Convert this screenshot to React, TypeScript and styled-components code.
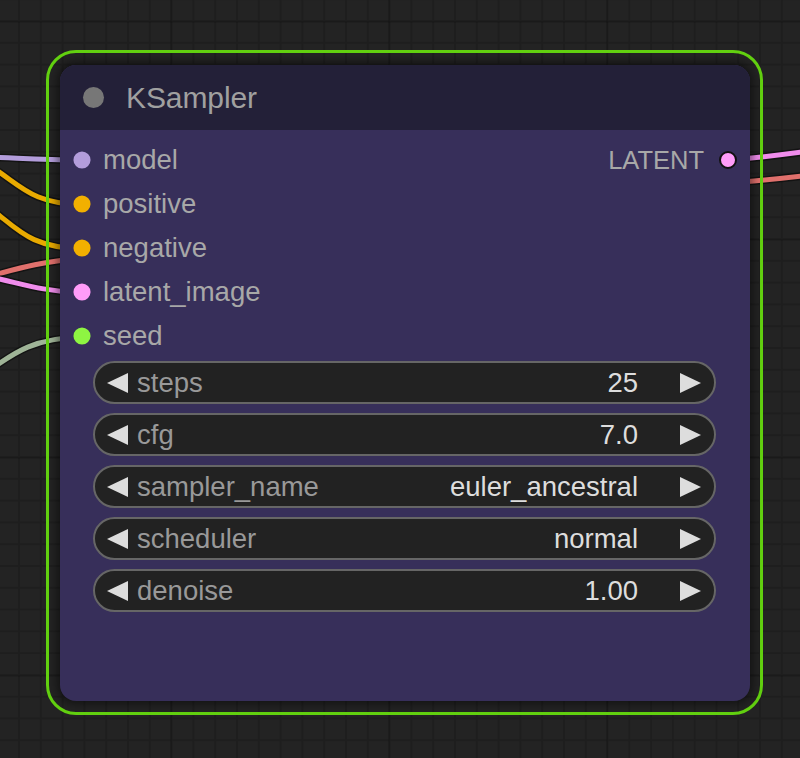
import React from "react";
import styled, { createGlobalStyle } from "styled-components";

const Global = createGlobalStyle`
  html, body { margin: 0; padding: 0; background: #222; }
  * { box-sizing: border-box; }
`;

const Canvas = styled.div`
  position: relative;
  width: 800px;
  height: 758px;
  overflow: hidden;
  font-family: "Liberation Sans", Arial, sans-serif;
  background-color: #232323;
  background-image:
    linear-gradient(to right, rgba(0,0,0,0.12) 1.5px, transparent 1.5px),
    linear-gradient(to bottom, rgba(0,0,0,0.12) 1.5px, transparent 1.5px),
    linear-gradient(to right, #1e1e1e 1.5px, transparent 1.5px),
    linear-gradient(to bottom, #1e1e1e 1.5px, transparent 1.5px);
  background-size: 218px 218px, 218px 218px, 21.8px 21.8px, 21.8px 21.8px;
  background-position: 170px 21px, 170px 21px, 18px 20px, 18px 20px;
`;

const Wires = styled.svg`
  position: absolute;
  inset: 0;
  width: 800px;
  height: 758px;
`;

const Frame = styled.div`
  position: absolute;
  left: 46px;
  top: 50px;
  width: 717px;
  height: 665px;
  border: 3px solid #62d010;
  border-radius: 30px;
  padding: 12px 10px 11px 11px;
  display: flex;
`;

const Node = styled.div`
  flex: 1;
  display: flex;
  flex-direction: column;
  background: #372f5a;
  border-radius: 16px;
  overflow: hidden;
  box-shadow: 0 0 8px 3px rgba(0, 0, 0, 0.45);
`;

const TitleBar = styled.div`
  height: 65px;
  flex: none;
  display: flex;
  align-items: center;
  gap: 22px;
  padding-left: 23px;
  background: #232038;
`;

const TitleDot = styled.span`
  width: 21px;
  height: 21px;
  border-radius: 50%;
  background: #777;
`;

const Title = styled.span`
  font-size: 30px;
  color: #a0a0a0;
  letter-spacing: -0.1px;
`;

const Slots = styled.div`
  padding-top: 8px;
  display: flex;
  flex-direction: column;
`;

const SlotRow = styled.div`
  height: 44px;
  display: flex;
  align-items: center;
  justify-content: space-between;
  padding: 0 13px 0 13px;
`;

const Slot = styled.div<{ $small?: boolean }>`
  display: flex;
  align-items: center;
  gap: 13px;
  font-size: ${(p) => (p.$small ? "25.5px" : "27.5px")};
  color: #a8a8a8;
`;

const SlotDot = styled.span<{ $c: string; $out?: boolean }>`
  width: 18px;
  height: 18px;
  border-radius: 50%;
  background: ${(p) => p.$c};
  border: ${(p) => (p.$out ? "2px solid #111" : "none")};
  ${(p) => (p.$out ? "margin-left: 2px;" : "transform: scale(0.95); margin-right: -1px;")}
`;

const Widgets = styled.div`
  display: flex;
  flex-direction: column;
  gap: 9px;
  padding: 3px 34px 0 33px;
`;

const Pill = styled.div`
  height: 43px;
  display: flex;
  align-items: center;
  border: 2px solid #666;
  border-radius: 22px;
  background: #222;
  padding: 0 13px 0 12px;
  font-size: 27.5px;
`;

const Arrow = styled.span<{ $dir: "left" | "right" }>`
  width: 0;
  height: 0;
  flex: none;
  border-top: 10.5px solid transparent;
  border-bottom: 10.5px solid transparent;
  ${(p) =>
    p.$dir === "left"
      ? "border-right: 21px solid #ddd;"
      : "border-left: 21px solid #ddd; margin-left: 42px;"}
`;

const WLabel = styled.span`
  flex: 1;
  margin-left: 9px;
  color: #999;
`;

const WValue = styled.span`
  color: #ddd;
`;

const inputs = [
  { name: "model", c: "#b39ddb" },
  { name: "positive", c: "#f2b000" },
  { name: "negative", c: "#f2b000" },
  { name: "latent_image", c: "#ff9cf9" },
  { name: "seed", c: "#8ef542" },
];

const widgets = [
  { name: "steps", value: "25" },
  { name: "cfg", value: "7.0" },
  { name: "sampler_name", value: "euler_ancestral" },
  { name: "scheduler", value: "normal" },
  { name: "denoise", value: "1.00" },
];

const wirePaths = [
  { d: "M -10 157 C 20 158, 40 160, 82 160", c: "#b39ddb" },
  { d: "M -10 166 C 22 186, 30 203, 82 205", c: "#e8aa00" },
  { d: "M -10 208 C 20 231, 30 247, 82 249", c: "#e8aa00" },
  { d: "M -10 276 C 20 268, 40 262, 82 258", c: "#e0706c" },
  { d: "M -10 277 C 20 283, 40 291, 82 293", c: "#f08cec" },
  { d: "M -10 370 C 15 352, 35 338, 82 337", c: "#9fb497" },
  { d: "M 727 160 C 760 158, 780 155, 810 151", c: "#f08cec" },
  { d: "M 727 183 C 760 181, 785 178, 810 175", c: "#e0706c" },
];

export default function App() {
  return (
    <>
      <Global />
      <Canvas>
        <Wires viewBox="0 0 800 758">
          {wirePaths.map((w, i) => (
            <g key={i} fill="none" strokeLinecap="round">
              <path d={w.d} stroke="rgba(0,0,0,0.45)" strokeWidth={8} />
              <path d={w.d} stroke={w.c} strokeWidth={5} />
            </g>
          ))}
        </Wires>
        <Frame>
          <Node>
            <TitleBar>
              <TitleDot />
              <Title>KSampler</Title>
            </TitleBar>
            <Slots>
              {inputs.map((inp, i) => (
                <SlotRow key={inp.name}>
                  <Slot>
                    <SlotDot $c={inp.c} />
                    {inp.name}
                  </Slot>
                  {i === 0 && (
                    <Slot $small>
                      LATENT
                      <SlotDot $c="#ff9cf9" $out />
                    </Slot>
                  )}
                </SlotRow>
              ))}
            </Slots>
            <Widgets>
              {widgets.map((w) => (
                <Pill key={w.name}>
                  <Arrow $dir="left" />
                  <WLabel>{w.name}</WLabel>
                  <WValue>{w.value}</WValue>
                  <Arrow $dir="right" />
                </Pill>
              ))}
            </Widgets>
          </Node>
        </Frame>
      </Canvas>
    </>
  );
}
